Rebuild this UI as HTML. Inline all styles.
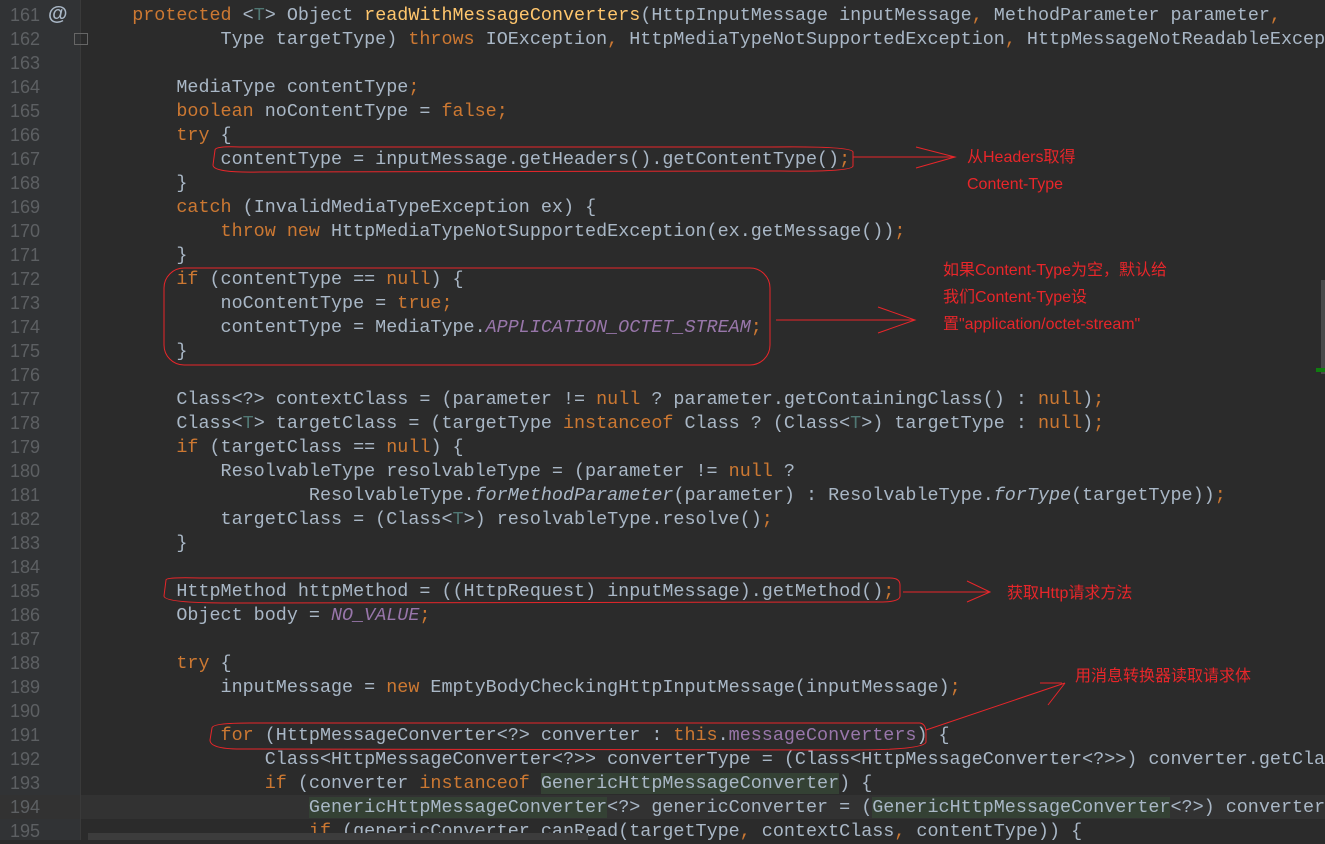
<!DOCTYPE html>
<html><head><meta charset="utf-8"><style>
html,body{margin:0;padding:0;}
body{width:1325px;height:840px;background:#2b2b2b;overflow:hidden;position:relative;font-family:"Liberation Mono",monospace;}
.gut{position:absolute;left:0;top:0;width:80px;height:840px;background:#313335;}
.sep{position:absolute;left:80px;top:0;width:1px;height:840px;background:#3a3a3a;}
.cur{position:absolute;left:0;top:795px;width:1325px;height:24px;background:#323232;}
.ln{position:absolute;left:10px;width:40px;font-size:18px;color:#5d6063;line-height:24px;font-family:"Liberation Sans",sans-serif;margin-top:1px;}
.l{position:absolute;left:88px;font-size:18.42px;line-height:24px;color:#a9b7c6;white-space:pre;margin-top:2px;}
.k{color:#cc7832}.f{color:#ffc66d}.t{color:#507874}.s{color:#9876aa;font-style:italic}.m{color:#9876aa}
.g{background:#344134}
.a{position:absolute;color:#e8262a;font-family:"Liberation Sans","Noto Sans CJK SC",sans-serif;font-size:16px;line-height:20px;white-space:nowrap;}
</style></head><body>
<div class="gut"></div><div class="cur"></div><div class="sep"></div>
<div style="position:absolute;left:48px;top:3px;color:#a9b7c6;font-size:20px;font-family:'Liberation Sans',sans-serif;font-weight:bold;">@</div>
<div style="position:absolute;left:74px;top:33px;width:12px;height:10px;border:1px solid #666;"></div>
<div class="ln" style="top:2px">161</div><div class="ln" style="top:26px">162</div><div class="ln" style="top:50px">163</div><div class="ln" style="top:74px">164</div><div class="ln" style="top:98px">165</div><div class="ln" style="top:122px">166</div><div class="ln" style="top:146px">167</div><div class="ln" style="top:170px">168</div><div class="ln" style="top:194px">169</div><div class="ln" style="top:218px">170</div><div class="ln" style="top:242px">171</div><div class="ln" style="top:266px">172</div><div class="ln" style="top:290px">173</div><div class="ln" style="top:314px">174</div><div class="ln" style="top:338px">175</div><div class="ln" style="top:362px">176</div><div class="ln" style="top:386px">177</div><div class="ln" style="top:410px">178</div><div class="ln" style="top:434px">179</div><div class="ln" style="top:458px">180</div><div class="ln" style="top:482px">181</div><div class="ln" style="top:506px">182</div><div class="ln" style="top:530px">183</div><div class="ln" style="top:554px">184</div><div class="ln" style="top:578px">185</div><div class="ln" style="top:602px">186</div><div class="ln" style="top:626px">187</div><div class="ln" style="top:650px">188</div><div class="ln" style="top:674px">189</div><div class="ln" style="top:698px">190</div><div class="ln" style="top:722px">191</div><div class="ln" style="top:746px">192</div><div class="ln" style="top:770px">193</div><div class="ln" style="top:794px">194</div><div class="ln" style="top:818px">195</div>

<div class="l" style="top:2px">    <span class="k">protected</span> &lt;<span class="t">T</span>&gt; Object <span class="f">readWithMessageConverters</span>(HttpInputMessage inputMessage<span class="k">,</span> MethodParameter parameter<span class="k">,</span></div>
<div class="l" style="top:26px">            Type targetType) <span class="k">throws</span> IOException<span class="k">,</span> HttpMediaTypeNotSupportedException<span class="k">,</span> HttpMessageNotReadableException {</div>
<div class="l" style="top:74px">        MediaType contentType<span class="k">;</span></div>
<div class="l" style="top:98px">        <span class="k">boolean</span> noContentType = <span class="k">false;</span></div>
<div class="l" style="top:122px">        <span class="k">try</span> {</div>
<div class="l" style="top:146px">            contentType = inputMessage.getHeaders().getContentType()<span class="k">;</span></div>
<div class="l" style="top:170px">        }</div>
<div class="l" style="top:194px">        <span class="k">catch</span> (InvalidMediaTypeException ex) {</div>
<div class="l" style="top:218px">            <span class="k">throw new</span> HttpMediaTypeNotSupportedException(ex.getMessage())<span class="k">;</span></div>
<div class="l" style="top:242px">        }</div>
<div class="l" style="top:266px">        <span class="k">if</span> (contentType == <span class="k">null</span>) {</div>
<div class="l" style="top:290px">            noContentType = <span class="k">true;</span></div>
<div class="l" style="top:314px">            contentType = MediaType.<span class="s">APPLICATION_OCTET_STREAM</span><span class="k">;</span></div>
<div class="l" style="top:338px">        }</div>
<div class="l" style="top:386px">        Class&lt;?&gt; contextClass = (parameter != <span class="k">null</span> ? parameter.getContainingClass() : <span class="k">null</span>)<span class="k">;</span></div>
<div class="l" style="top:410px">        Class&lt;<span class="t">T</span>&gt; targetClass = (targetType <span class="k">instanceof</span> Class ? (Class&lt;<span class="t">T</span>&gt;) targetType : <span class="k">null</span>)<span class="k">;</span></div>
<div class="l" style="top:434px">        <span class="k">if</span> (targetClass == <span class="k">null</span>) {</div>
<div class="l" style="top:458px">            ResolvableType resolvableType = (parameter != <span class="k">null</span> ?</div>
<div class="l" style="top:482px">                    ResolvableType.<i>forMethodParameter</i>(parameter) : ResolvableType.<i>forType</i>(targetType))<span class="k">;</span></div>
<div class="l" style="top:506px">            targetClass = (Class&lt;<span class="t">T</span>&gt;) resolvableType.resolve()<span class="k">;</span></div>
<div class="l" style="top:530px">        }</div>
<div class="l" style="top:578px">        HttpMethod httpMethod = ((HttpRequest) inputMessage).getMethod()<span class="k">;</span></div>
<div class="l" style="top:602px">        Object body = <span class="s">NO_VALUE</span><span class="k">;</span></div>
<div class="l" style="top:650px">        <span class="k">try</span> {</div>
<div class="l" style="top:674px">            inputMessage = <span class="k">new</span> EmptyBodyCheckingHttpInputMessage(inputMessage)<span class="k">;</span></div>
<div class="l" style="top:722px">            <span class="k">for</span> (HttpMessageConverter&lt;?&gt; converter : <span class="k">this</span>.<span class="m">messageConverters</span>) {</div>
<div class="l" style="top:746px">                Class&lt;HttpMessageConverter&lt;?&gt;&gt; converterType = (Class&lt;HttpMessageConverter&lt;?&gt;&gt;) converter.getClass()<span class="k">;</span></div>
<div class="l" style="top:770px">                <span class="k">if</span> (converter <span class="k">instanceof</span> <span class="g">GenericHttpMessageConverter</span>) {</div>
<div class="l" style="top:794px">                    <span class="g">GenericHttpMessageConverter</span>&lt;?&gt; genericConverter = (<span class="g">GenericHttpMessageConverter</span>&lt;?&gt;) converter<span class="k">;</span></div>
<div class="l" style="top:818px">                    <span class="k">if</span> (genericConverter.canRead(targetType<span class="k">,</span> contextClass<span class="k">,</span> contentType)) {</div>

<div style="position:absolute;left:88px;top:833px;width:500px;height:7px;background:#3c3c3c;"></div>
<div style="position:absolute;left:1321px;top:280px;width:4px;height:94px;background:#4a4a4a;"></div>
<div style="position:absolute;left:1316px;top:368px;width:9px;height:4px;background:#107c10;"></div>

<svg width="1325" height="840" style="position:absolute;left:0;top:0" fill="none" stroke="#e8262a" stroke-width="1">
<path d="M215,150 Q215,146 240,147 L770,147 Q852,146 853,152 L853,166 Q852,172 780,171 L260,172 Q213,173 213,165 Z"/>
<path d="M853,157 L955,157 M916,147 L955,157 L916,168"/>
<rect x="164" y="268" width="606" height="97" rx="20"/>
<path d="M776,320 L915,320 M878,307 L915,320 L878,333"/>
<path d="M166,580 Q166,577 200,578 L890,578 Q900,578 900,585 L900,596 Q900,602 880,602 L230,603 Q164,603 164,596 Z"/>
<path d="M903,592 L990,592 M967,581 L990,592 L967,602"/>
<path d="M212,728 Q212,723 250,723 L920,723 Q926,724 926,733 L926,742 Q924,750 850,750 L240,749 Q210,749 210,740 Z"/>
<path d="M926,730 L1065,683 M1040,683 L1062,683 M1065,683 L1048,705"/>
</svg>
<div class="a" style="left:967px;top:148px">从Headers取得</div>
<div class="a" style="left:967px;top:175px">Content-Type</div>
<div class="a" style="left:943px;top:261px">如果Content-Type为空，默认给</div>
<div class="a" style="left:943px;top:288px">我们Content-Type设</div>
<div class="a" style="left:943px;top:315px">置"application/octet-stream"</div>
<div class="a" style="left:1007px;top:584px">获取Http请求方法</div>
<div class="a" style="left:1075px;top:667px">用消息转换器读取请求体</div>
</body></html>
